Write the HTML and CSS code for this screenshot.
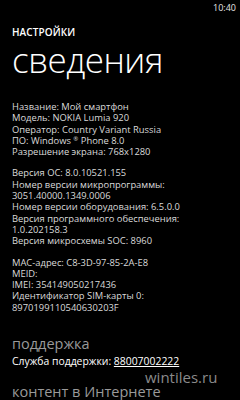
FILE: index.html
```html
<!DOCTYPE html>
<html lang="ru">
<head>
<meta charset="utf-8">
<link rel="stylesheet" href="styles.css">
</head>
<body>
<div class="phone">
  <div class="status"><span class="clock">10:40</span></div>
  <header class="head">
    <div class="app">НАСТРОЙКИ</div>
    <h1 class="title">сведения</h1>
  </header>
  <section class="info">
    <div class="group">
      <p>Название: Мой смартфон</p>
      <p>Модель: NOKIA Lumia 920</p>
      <p>Оператор: Country Variant Russia</p>
      <p>ПО: Windows <span class="reg">®</span> Phone 8.0</p>
      <p>Разрешение экрана: 768x1280</p>
    </div>
    <div class="group">
      <p>Версия ОС: 8.0.10521.155</p>
      <p>Номер версии микропрограммы:</p>
      <p>3051.40000.1349.0006</p>
      <p>Номер версии оборудования: 6.5.0.0</p>
      <p>Версия программного обеспечения:</p>
      <p>1.0.202158.3</p>
      <p>Версия микросхемы SOC: 8960</p>
    </div>
    <div class="group">
      <p>MAC-адрес: C8-3D-97-85-2A-E8</p>
      <p>MEID:</p>
      <p>IMEI: 354149050217436</p>
      <p>Идентификатор SIM-карты 0:</p>
      <p>8970199110540630203F</p>
    </div>
  </section>
  <section class="support">
    <h2 class="sub">поддержка</h2>
    <p class="link-line">Служба поддержки: <a class="phone-link">88007002222</a></p>
    <h2 class="sub">контент в Интернете</h2>
  </section>
  <div class="watermark">wintiles.ru</div>
</div>
</body>
</html>
```
FILE: styles.css
```css
html, body {
  margin: 0;
  padding: 0;
  background: #000;
}
.phone {
  position: relative;
  width: 240px;
  height: 400px;
  overflow: hidden;
  background: #000;
  color: #fff;
  font-family: "Open Sans", "Noto Sans", sans-serif;
}
.status {
  display: flex;
  justify-content: flex-end;
  height: 16px;
  padding: 2px 4px 0 0;
  box-sizing: border-box;
}
.clock {
  font-size: 9px;
  line-height: 12px;
  color: #e6e6e6;
}
.head {
  padding: 0 0 0 12px;
}
.app {
  margin-top: 10px;
  font-size: 10px;
  line-height: 12px;
  font-weight: 600;
  letter-spacing: 0.1px;
}
.title {
  margin: 2px 0 0;
  font-size: 35px;
  line-height: 40px;
  font-weight: 300;
  letter-spacing: -0.5px;
}
.info {
  padding: 21px 0 0 12px;
}
.group {
  margin-bottom: 10px;
}
.group p {
  margin: 0;
  font-size: 9.4px;
  line-height: 11.3px;
  color: #dadada;
}
.reg {
  font-size: 6px;
  vertical-align: 3px;
  line-height: 0;
}
.support {
  padding: 12px 0 0 12px;
}
.sub {
  margin: 0;
  font-size: 14.5px;
  line-height: 18px;
  font-weight: 400;
  color: #9a9a9a;
}
.link-line {
  margin: 1px 0 15px;
  font-size: 10.4px;
  line-height: 14px;
  color: #fff;
}
.phone-link {
  text-decoration: underline;
  text-underline-offset: 1px;
}
.watermark {
  position: absolute;
  left: 145px;
  top: 368px;
  font-size: 15px;
  line-height: 18px;
  color: #8a8a8a;
}
```
